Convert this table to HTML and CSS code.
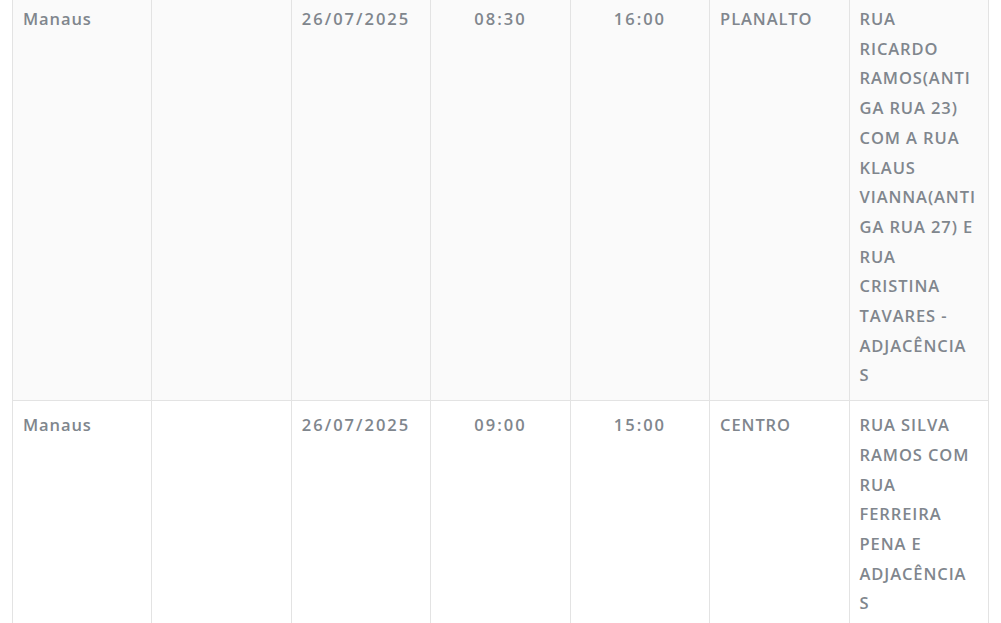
FILE: index.html
```html
<!DOCTYPE html>
<html lang="pt-BR">
<head>
<meta charset="utf-8">
<title>Interdições</title>
<link rel="stylesheet" href="styles.css">
</head>
<body>
<div class="wrap">
  <table class="grid">
    <tbody>
      <tr class="row odd">
        <td>Manaus</td>
        <td></td>
        <td class="num">26/07/2025</td>
        <td class="num c">08:30</td>
        <td class="num c">16:00</td>
        <td>PLANALTO</td>
        <td>RUA<br>RICARDO<br>RAMOS(ANTI<br>GA RUA 23)<br>COM A RUA<br>KLAUS<br>VIANNA(ANTI<br>GA RUA 27) E<br>RUA<br>CRISTINA<br>TAVARES -<br>ADJACÊNCIA<br>S</td>
      </tr>
      <tr class="row even">
        <td>Manaus</td>
        <td></td>
        <td class="num">26/07/2025</td>
        <td class="num c">09:00</td>
        <td class="num c">15:00</td>
        <td>CENTRO</td>
        <td>RUA SILVA<br>RAMOS COM<br>RUA<br>FERREIRA<br>PENA E<br>ADJACÊNCIA<br>S</td>
      </tr>
    </tbody>
  </table>
</div>
</body>
</html>
```

FILE: styles.css
```css
html, body {
  margin: 0;
  padding: 0;
  background: #ffffff;
}
body {
  font-family: "Open Sans", "Liberation Sans", sans-serif;
  overflow: hidden;
}
.wrap {
  margin-top: -6px;
  padding-left: 12px;
}
.grid {
  width: 977px;
  border-collapse: collapse;
  table-layout: fixed;
}
.grid td {
  border: 1px solid #e3e3e3;
  padding: 9px 10px 10px;
  vertical-align: top;
  font-size: 16.5px;
  line-height: 29.7px;
  font-weight: 600;
  color: #80868d;
  letter-spacing: 0.9px;
  white-space: nowrap;
}
.grid td.num {
  letter-spacing: 2px;
}
.grid td.c {
  text-align: center;
}
.odd td {
  background: #fafafa;
}
.even td {
  background: #ffffff;
}
```
